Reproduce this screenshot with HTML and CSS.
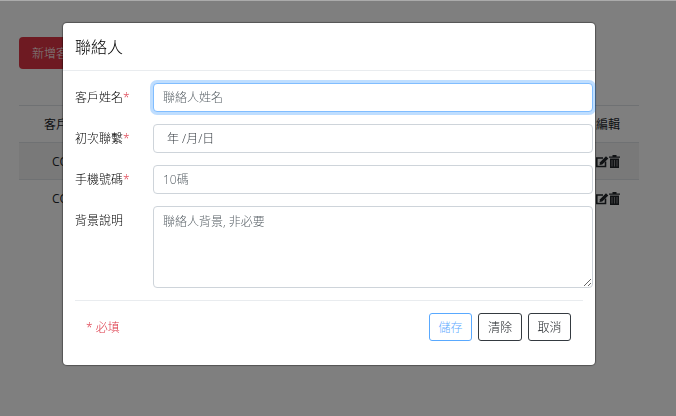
FILE: index.html
```html
<!DOCTYPE html>
<html lang="zh-Hant">
<head>
<meta charset="utf-8">
<title>聯絡人</title>
<link rel="stylesheet" href="styles.css">
</head>
<body>
<main class="page">
  <button class="btn-add" type="button">新增客戶</button>
  <table class="list">
    <thead>
      <tr><th class="col-main">客戶名稱</th><th class="col-edit">編輯</th></tr>
    </thead>
    <tbody>
      <tr class="striped"><td class="col-main">COMPANY</td><td class="col-edit">
        <div class="icons">
          <svg viewBox="0 0 13 13" width="13" height="13"><path d="M7 3H.8V11.500H9.500V6.500" fill="none" stroke="currentColor" stroke-width="1.600"/><path d="M3.500 10l.5-2.800L10 1.200l2.300 2.300L6.300 9.500z" fill="currentColor"/></svg>
          <svg viewBox="0 0 11 13" width="11" height="13"><path d="M0 1.500h3.500V0h4v1.500H11v1.300H0z" fill="currentColor"/><path d="M1 3.500h9V13H1z" fill="currentColor"/><path d="M3 5v6.500M5.500 5v6.500M8 5v6.500" fill="none" stroke="#fff" stroke-opacity=".45" stroke-width="1"/></svg>
        </div>
      </td></tr>
      <tr><td class="col-main">COMPANY</td><td class="col-edit">
        <div class="icons">
          <svg viewBox="0 0 13 13" width="13" height="13"><path d="M7 3H.8V11.500H9.500V6.500" fill="none" stroke="currentColor" stroke-width="1.600"/><path d="M3.500 10l.5-2.800L10 1.200l2.300 2.300L6.300 9.500z" fill="currentColor"/></svg>
          <svg viewBox="0 0 11 13" width="11" height="13"><path d="M0 1.500h3.500V0h4v1.500H11v1.300H0z" fill="currentColor"/><path d="M1 3.500h9V13H1z" fill="currentColor"/><path d="M3 5v6.500M5.500 5v6.500M8 5v6.500" fill="none" stroke="#fff" stroke-opacity=".45" stroke-width="1"/></svg>
        </div>
      </td></tr>
    </tbody>
  </table>
</main>
<div class="backdrop"></div>
<section class="modal">
  <header class="modal-head">聯絡人</header>
  <form class="modal-body">
    <div class="row"><label class="lbl">客戶姓名<span class="req">*</span></label><input class="field" type="text" placeholder="聯絡人姓名" autofocus></div>
    <div class="row"><label class="lbl">初次聯繫<span class="req">*</span></label><input class="field date" type="text" value="年 /月/日"></div>
    <div class="row"><label class="lbl">手機號碼<span class="req">*</span></label><input class="field" type="text" placeholder="10碼"></div>
    <div class="row"><label class="lbl">背景說明</label><textarea class="field area" placeholder="聯絡人背景, 非必要"></textarea></div>
    <div class="foot">
      <span class="note">* 必填</span>
      <div class="actions">
        <button class="btn btn-save" type="button">儲存</button>
        <button class="btn btn-clear" type="button">清除</button>
        <button class="btn" type="button">取消</button>
      </div>
    </div>
  </form>
</section>
</body>
</html>
```
FILE: styles.css
```css
* { box-sizing: border-box; }
html, body { margin: 0; height: 100%; }
body {
  background: #fff;
  color: #000;
  font-family: "Open Sans", "Noto Sans CJK TC", sans-serif;
  font-size: 12px;
  font-weight: 300;
  overflow: hidden;
}
.page { padding: 37px 37px 0 19px; }
.btn-add {
  display: block;
  width: 90px;
  height: 32px;
  padding: 0 13px;
  text-align: left;
  border: 0;
  border-radius: 4px;
  background: #dc3545;
  color: #fff;
  font: inherit;
}
.list {
  width: 620px;
  margin-top: 36px;
  border-collapse: collapse;
  table-layout: fixed;
  color: #212529;
}
.list th, .list td {
  height: 37px;
  border-top: 1px solid #dee2e6;
  font-weight: 400;
  text-align: left;
  padding: 0;
  vertical-align: middle;
}
.list .col-main { padding-left: 25px; }
.list td.col-main { padding-left: 33px; }
.list .col-edit { width: 43px; }
.striped { background: #f2f2f2; }
.icons { display: flex; margin-top: 1px; color: #212529; }
.backdrop {
  position: fixed;
  inset: 0;
  background: rgba(0, 0, 0, .5);
  background-clip: padding-box;
  border-top: 1px solid rgba(0, 0, 0, .33);
}
.modal {
  position: fixed;
  left: 63px;
  top: 23px;
  width: 532px;
  height: 342px;
  background: #fff;
  border-radius: 4px;
  box-shadow: 0 0 1px 1px rgba(0, 0, 0, .35);
}
.modal-head {
  height: 48px;
  padding: 12px 12px 0;
  font-size: 16px;
  line-height: 24px;
  border-bottom: 1px solid #e9ecef;
}
.modal-body { padding: 12px 2px 0 12px; }
.row { display: flex; align-items: flex-start; margin-bottom: 12px; }
.lbl { width: 78px; flex: none; line-height: 29px; }
.req { color: #dc3545; }
.field {
  display: block;
  flex: 1;
  min-width: 0;
  height: 29px;
  padding: 0 9px;
  border: 1px solid #ced4da;
  border-radius: 4px;
  background: #fff;
  color: #343a40;
  font: inherit;
  outline: 0;
}
.field::placeholder { color: #5a6268; opacity: 1; }
.field:focus { border-color: #80bdff; box-shadow: 0 0 0 3px rgba(0, 123, 255, .25); }
.date { padding: 0 9px 2px 13px; }
.area { height: 82px; padding: 5px 9px; resize: both; }
.foot {
  display: flex;
  align-items: center;
  justify-content: space-between;
  margin-right: 10px;
  padding: 12px 12px 0 11px;
  border-top: 1px solid #e9ecef;
}
.note { color: #dc3545; }
.actions { display: flex; gap: 6px; }
.btn {
  width: 43px;
  height: 28px;
  padding: 0;
  border: 1px solid #343a40;
  border-radius: 3px;
  background: #fff;
  color: #212529;
  font: inherit;
}
.btn-clear { width: 44px; }
.btn-save { border-color: #007bff; color: #007bff; opacity: .65; }
```
